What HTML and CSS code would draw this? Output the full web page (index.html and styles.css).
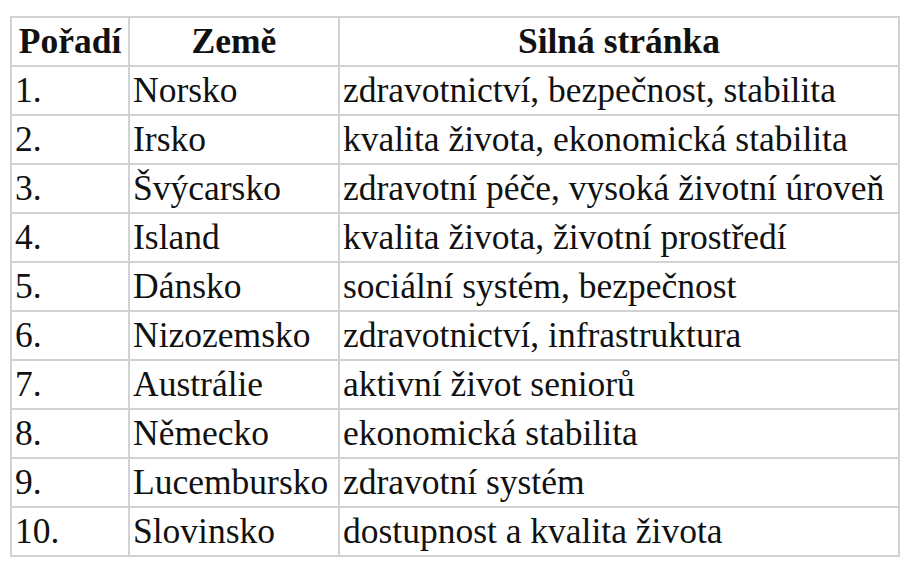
FILE: index.html
```html
<!DOCTYPE html>
<html lang="cs">
<head>
<meta charset="utf-8">
<link rel="stylesheet" href="styles.css">
</head>
<body>
<div class="page">
<table class="rank">
<colgroup>
<col class="c-rank">
<col class="c-country">
<col class="c-strength">
</colgroup>
<thead>
<tr><th>Pořadí</th><th>Země</th><th>Silná stránka</th></tr>
</thead>
<tbody>
<tr><td>1.</td><td>Norsko</td><td>zdravotnictví, bezpečnost, stabilita</td></tr>
<tr><td>2.</td><td>Irsko</td><td>kvalita života, ekonomická stabilita</td></tr>
<tr><td>3.</td><td>Švýcarsko</td><td>zdravotní péče, vysoká životní úroveň</td></tr>
<tr><td>4.</td><td>Island</td><td>kvalita života, životní prostředí</td></tr>
<tr><td>5.</td><td>Dánsko</td><td>sociální systém, bezpečnost</td></tr>
<tr><td>6.</td><td>Nizozemsko</td><td>zdravotnictví, infrastruktura</td></tr>
<tr><td>7.</td><td>Austrálie</td><td>aktivní život seniorů</td></tr>
<tr><td>8.</td><td>Německo</td><td>ekonomická stabilita</td></tr>
<tr><td>9.</td><td>Lucembursko</td><td>zdravotní systém</td></tr>
<tr><td>10.</td><td>Slovinsko</td><td>dostupnost a kvalita života</td></tr>
</tbody>
</table>
</div>
</body>
</html>
```
FILE: styles.css
```css
html, body {
  margin: 0;
  padding: 0;
  background: #fff;
  font-family: "Liberation Serif", "Times New Roman", serif;
}
.page {
  padding: 16px 10px;
}
.rank {
  border-collapse: collapse;
  table-layout: fixed;
  width: 888px;
  font-size: 35.5px;
  color: #111;
}
.c-rank { width: 118px; }
.c-country { width: 210px; }
.c-strength { width: 560px; }
.rank th, .rank td {
  font-family: "Liberation Serif", "Times New Roman", serif;
  border: 2px solid #d2d2d2;
  height: 49px;
  padding: 0 3px;
  line-height: 1.15;
  box-sizing: border-box;
  white-space: nowrap;
  overflow: hidden;
}
.rank th {
  text-align: center;
  font-weight: bold;
}
.rank td {
  text-align: left;
}
```
